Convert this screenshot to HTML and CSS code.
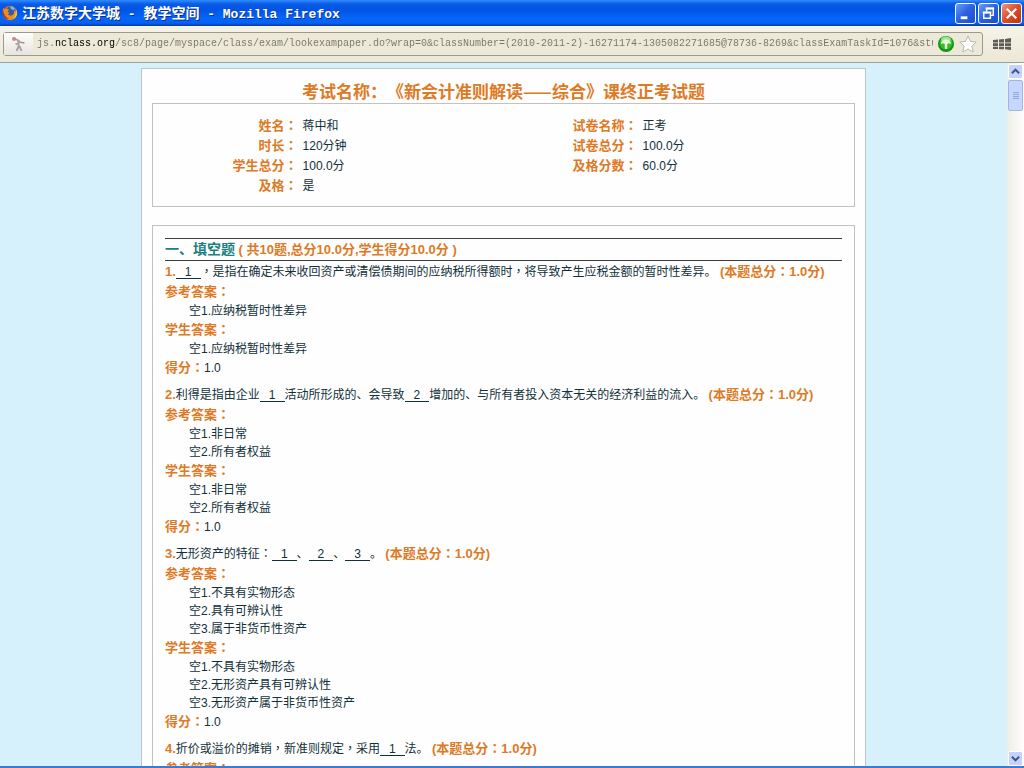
FILE: index.html
```html
<!DOCTYPE html>
<html>
<head>
<meta charset="utf-8">
<title>江苏数字大学城 - 教学空间</title>
<link rel="stylesheet" href="styles.css">
</head>
<body>
<header class="titlebar">
  <svg class="fox" viewBox="0 0 16 16" aria-hidden="true"><circle cx="8" cy="8" r="7.2" fill="#e8711c"/><circle cx="8.5" cy="6.5" r="5" fill="#2d5fa8"/><path d="M8 2c2-1 4 0 5 2l-2 1-2-1z" fill="#7cb7e8"/><path d="M1 3l2 1.500C4 3.500 6 3.500 7 5L5.500 6.500 7.500 8 6 9c1 2 4 2 5.500 0 1-1.500.500-3 0-4 2 1 3.500 2 3.500 4-1 4-4 6-7.500 6C3 15 0 11 1 3z" fill="#f28a22"/><path d="M14 4c2 4 1 8-3 10 2-3 3-6 3-10z" fill="#fbc63a"/><path d="M1 3c0 5 2 9 6 11-4 1-8-4-6-11z" fill="#a83a12"/></svg>
  <h1 class="caption">江苏数字大学城<span class="latin"> - </span>教学空间<span class="latin"> - Mozilla Firefox</span></h1>
  <button class="win" aria-label="最小化"><svg viewBox="0 0 20 20"><path d="M5 13h7v3H5z" fill="#fff"/></svg></button>
  <button class="win" aria-label="还原"><svg viewBox="0 0 20 20"><path d="M8 8V5h7v7h-3" fill="none" stroke="#fff" stroke-width="1.500"/><path d="M7 4.500h9" stroke="#fff" stroke-width="2"/><path d="M5 9h7v6H5z" fill="none" stroke="#fff" stroke-width="1.500"/><path d="M4 9h9" stroke="#fff" stroke-width="2"/></svg></button>
  <button class="win close" aria-label="关闭"><svg viewBox="0 0 20 20"><path d="M5 5l10 10M15 5L5 15" stroke="#fff" stroke-width="2.400"/></svg></button>
</header>
<div class="toolbar">
  <div class="address">
    <span class="site"><svg viewBox="0 0 16 16" aria-hidden="true"><circle cx="3.500" cy="3" r="2" fill="#c98a88"/><path d="M3 2l4 2 2 2 5 1" stroke="#c08888" stroke-width="1.500" fill="none"/><circle cx="8" cy="5" r="1.500" fill="#a9a9b0"/><path d="M8 6v5l-2 4M9 10l2 5M8 7l-3 1" stroke="#a3a3aa" stroke-width="2" fill="none"/></svg></span>
    <input class="url" type="text" aria-label="网址" value="js.nclass.org/sc8/page/myspace/class/exam/lookexampaper.do?wrap=0&amp;classNumber=(2010-2011-2)-16271174-1305082271685@78736-8269&amp;classExamTaskId=1076&amp;stuId=">
    <button class="tool" aria-label="打开"><svg viewBox="0 0 18 18"><circle cx="9" cy="9" r="8" fill="#139313"/><circle cx="9" cy="8" r="6.500" fill="#38bd29"/><ellipse cx="9" cy="4.500" rx="5" ry="3" fill="#9be688"/><path d="M4 9c0-6 10-6 10 0l-2-.800-1.800.800v5H7.800V9L6 8.200z" fill="#e9f9e2"/></svg></button>
    <button class="tool" aria-label="收藏"><svg viewBox="0 0 18 18"><path d="M9 1l2.400 5.400 5.800.600-4.300 4 1.200 6L9 14l-5.100 3 1.200-6-4.300-4 5.800-.600z" fill="#fff" stroke="#b9b8b2"/></svg></button>
  </div>
  <button class="tabs" aria-label="标签组"><svg viewBox="0 0 18 12"><path d="M0 2l5-.500v3H0zM6 1.400l5-.400v3.500H6zM12 1l6-1v4.500h-6zM0 5.300h5v2.700H0zM6 5.300h5v2.700H6zM12 5.300h6v2.700h-6zM0 8.800h5V11H0zM6 8.800h5v2.400H6zM12 8.800h6V12l-6-.700z" fill="#5c5c58"/></svg></button>
</div>
<div class="viewport">
<main class="page">
  <article class="paper">
    <h2 class="title">考试名称：《新会计准则解读——综合》课终正考试题</h2>
    <section class="box info">
      <table class="facts">
        <tr><th>姓名<span class="mid">：</span></th><td>蒋中和</td><th>试卷名称<span class="mid">：</span></th><td>正考</td></tr>
        <tr><th>时长<span class="mid">：</span></th><td>120分钟</td><th>试卷总分<span class="mid">：</span></th><td>100.0分</td></tr>
        <tr><th>学生总分<span class="mid">：</span></th><td>100.0分</td><th>及格分数<span class="mid">：</span></th><td>60.0分</td></tr>
        <tr><th>及格<span class="mid">：</span></th><td>是</td><th></th><td></td></tr>
      </table>
    </section>
    <section class="box exam">
      <h3 class="part"><span class="name">一、填空题</span> ( 共10题,总分10.0分,学生得分10.0分 )</h3>
      <div class="item">
        <p><b>1.</b><span class="blank">1</span><span class="mid">，</span>是指在确定未来收回资产或清偿债期间的应纳税所得额时<span class="mid">，</span>将导致产生应税金额的暂时性差异。 <b>(本题总分<span class="mid">：</span>1.0分)</b></p>
        <h4>参考答案<span class="mid">：</span></h4>
        <ul><li>空1.应纳税暂时性差异</li></ul>
        <h4>学生答案<span class="mid">：</span></h4>
        <ul><li>空1.应纳税暂时性差异</li></ul>
        <p><b>得分<span class="mid">：</span></b>1.0</p>
      </div>
      <div class="item">
        <p><b>2.</b>利得是指由企业<span class="blank">1</span>活动所形成的、会导致<span class="blank">2</span>增加的、与所有者投入资本无关的经济利益的流入。 <b>(本题总分<span class="mid">：</span>1.0分)</b></p>
        <h4>参考答案<span class="mid">：</span></h4>
        <ul><li>空1.非日常</li><li>空2.所有者权益</li></ul>
        <h4>学生答案<span class="mid">：</span></h4>
        <ul><li>空1.非日常</li><li>空2.所有者权益</li></ul>
        <p><b>得分<span class="mid">：</span></b>1.0</p>
      </div>
      <div class="item">
        <p><b>3.</b>无形资产的特征<span class="mid">：</span><span class="blank">1</span>、<span class="blank">2</span>、<span class="blank">3</span>。 <b>(本题总分<span class="mid">：</span>1.0分)</b></p>
        <h4>参考答案<span class="mid">：</span></h4>
        <ul><li>空1.不具有实物形态</li><li>空2.具有可辨认性</li><li>空3.属于非货币性资产</li></ul>
        <h4>学生答案<span class="mid">：</span></h4>
        <ul><li>空1.不具有实物形态</li><li>空2.无形资产具有可辨认性</li><li>空3.无形资产属于非货币性资产</li></ul>
        <p><b>得分<span class="mid">：</span></b>1.0</p>
      </div>
      <div class="item">
        <p><b>4.</b>折价或溢价的摊销<span class="mid">，</span>新准则规定<span class="mid">，</span>采用<span class="blank">1</span>法。 <b>(本题总分<span class="mid">：</span>1.0分)</b></p>
        <h4>参考答案<span class="mid">：</span></h4>
      </div>
    </section>
  </article>
</main>
<aside class="scroll">
  <button class="arrow" aria-label="向上滚动"><svg viewBox="0 0 10 10"><path d="M1 7l4-4 4 4" fill="none" stroke="#3f5786" stroke-width="2.200"/></svg></button>
  <div class="thumb"><i></i><i></i><i></i><i></i></div>
  <button class="arrow last" aria-label="向下滚动"><svg viewBox="0 0 10 10"><path d="M1 3l4 4 4-4" fill="none" stroke="#3f5786" stroke-width="2.200"/></svg></button>
</aside>
</div>
</body>
</html>
```
FILE: styles.css
```css
* { box-sizing: border-box; }
body {
  margin: 0;
  height: 100vh;
  display: flex;
  flex-direction: column;
  overflow: hidden;
  border-bottom: 2px solid #3b7ad6;
  font: 12px/20px "Liberation Sans", "Noto Sans CJK SC", sans-serif;
  text-spacing-trim: space-all;
  color: #12303a;
}
h1, h2, h3, h4, p, ul { margin: 0; padding: 0; }
button { border: 0; padding: 0; background: none; display: block; flex: none; }
svg { display: block; width: 100%; height: 100%; }

.titlebar {
  flex: none;
  display: flex;
  align-items: center;
  gap: 2px;
  height: 26px;
  padding: 0 2px;
  background: linear-gradient(#2f8cff 0, #0b5be6 4px, #0054e3 10px, #0566fb 18px, #0562f5 23px, #0a3aa8 26px);
}
.fox { width: 16px; height: 16px; flex: none; }
.caption {
  flex: 1;
  padding-left: 2px;
  font: bold 14px/24px "Noto Sans CJK SC", sans-serif;
  color: #fff;
  text-shadow: 1px 1px #0a2f8a;
  white-space: pre;
}
.latin { font: bold 13px/24px "Liberation Mono", monospace; }
.win {
  width: 21px;
  height: 21px;
  border: 1px solid #fff;
  border-radius: 3px;
  background: linear-gradient(135deg, #6b9bf8, #2a5fe0 50%, #1c4fce);
}
.close { background: linear-gradient(135deg, #f0957c, #dc4c28 50%, #bd3512); }

.toolbar {
  flex: none;
  display: flex;
  align-items: center;
  gap: 8px;
  height: 37px;
  padding: 0 13px 0 3px;
  background: linear-gradient(#f6f4e9, #ebe8d7);
  border-bottom: 1px solid #9aa09d;
}
.address {
  flex: 1;
  display: flex;
  align-items: center;
  gap: 4px;
  height: 24px;
  padding-right: 5px;
  border: 1px solid #9c9a8e;
  border-radius: 3px;
  background: #ece9d8;
}
.site {
  flex: none;
  width: 29px;
  height: 22px;
  padding: 3px 6px;
  background: linear-gradient(#fdfdfb, #e6e5de);
}
.url {
  flex: 1;
  min-width: 0;
  border: 0;
  padding: 0;
  outline: 0;
  font: 10px/20px "Liberation Mono", monospace;
  color: #77756a;
  background: linear-gradient(90deg, #77756a 18px, #000 18px, #000 78px, #77756a 78px);
  background-clip: text;
  -webkit-background-clip: text;
  -webkit-text-fill-color: transparent;
}
.tool { width: 18px; height: 18px; }
.tabs { width: 18px; height: 12px; margin-left: 2px; }

.viewport { flex: 1; min-height: 0; display: flex; background: #d7f1fc; }
.page { flex: 1; min-width: 0; padding: 5px 0; overflow: hidden; }
.paper {
  max-width: 725px;
  margin: 0 auto;
  padding: 10px;
  border: 1px solid #bcc5ca;
  background: #fefefe;
}
.title {
  font: bold 17px/24px "Noto Sans CJK SC", sans-serif;
  color: #de7a25;
  text-align: center;
  white-space: nowrap;
}
.box { border: 1px solid #c0c3c6; }
.info { padding: 12px 0 9px; min-height: 104px; margin-bottom: 18px; }
.facts { width: 97%; border-collapse: collapse; table-layout: fixed; }
.facts th { width: 22%; padding: 0 5px 0 0; text-align: right; font-size: 13px; color: #de7a25; }
.facts td { width: 28%; padding: 0; }
.facts th, .facts td { height: 20px; line-height: 18px; }
.mid { font-family: "Noto Sans CJK TC", sans-serif; line-height: 1; }

.exam { padding: 12px; }
.part {
  margin-bottom: 1px;
  border-top: 1px solid #3c3c42;
  border-bottom: 1px solid #3c3c42;
  font-size: 13px;
  line-height: 21px;
  height: 23px;
  color: #de7a25;
}
.name { font-size: 14px; color: #1a8080; }
.item { padding-bottom: 7px; }
.item h4, .item b { font-size: 13px; color: #de7a25; }
.item p, .item h4 { height: 20px; white-space: nowrap; line-height: 20px; }
.item ul { list-style: none; padding-left: 24px; line-height: 18px; }
.blank { padding: 0 9px; border-bottom: 1px solid #12303a; line-height: 12px; display: inline-block; }

.scroll {
  flex: none;
  width: 17px;
  display: flex;
  flex-direction: column;
  padding: 1px 1px 0;
  background: linear-gradient(90deg, #eeede5, #fefefb);
}
.arrow {
  height: 15px;
  padding: 2px;
  border: 1px solid #fff;
  border-radius: 2px;
  background: #c3d3fb;
}
.last { margin-top: auto; }
.thumb {
  display: flex;
  flex-direction: column;
  align-items: center;
  justify-content: center;
  gap: 1px;
  height: 31px;
  margin-top: 1px;
  border: 1px solid #9fb5e8;
  border-radius: 2px;
  background: #c6d6fc;
}
.thumb i { width: 6px; height: 1px; background: #8ea8e4; }
```
